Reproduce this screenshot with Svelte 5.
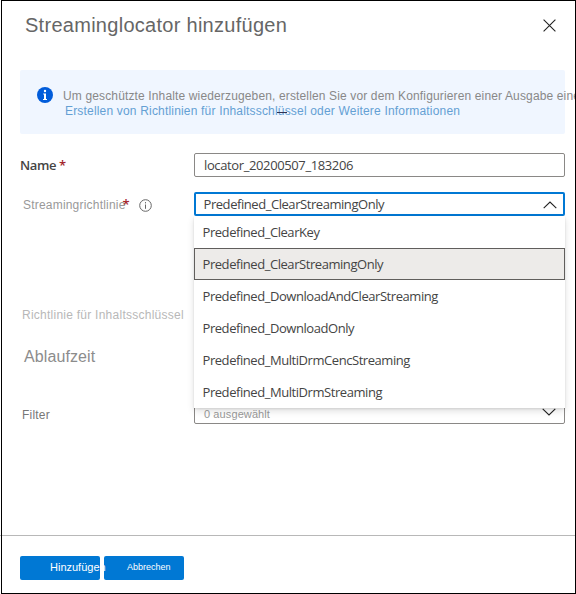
<script>
  const options = [
    'Predefined_ClearKey',
    'Predefined_ClearStreamingOnly',
    'Predefined_DownloadAndClearStreaming',
    'Predefined_DownloadOnly',
    'Predefined_MultiDrmCencStreaming',
    'Predefined_MultiDrmStreaming'
  ];
  let selected = $state('Predefined_ClearStreamingOnly');
</script>

<div class="panel">
  <header>
    <h1>Streaminglocator hinzufügen</h1>
    <svg class="close" width="13" height="13" viewBox="0 0 13 13"><path d="M.6.6 12.4 12.4M12.4.6.6 12.4" /></svg>
  </header>

  <section class="banner">
    <svg width="16" height="16" viewBox="0 0 16 16">
      <circle cx="8" cy="8" r="8" fill="#015cda" />
      <circle cx="8" cy="4" r="1.2" fill="#fff" />
      <path d="M6.200 6.500H9V12h1v1H6v-1h1V7.500h-.8z" fill="#fff" />
    </svg>
    <div class="message">
      <p>Um geschützte Inhalte wiederzugeben, erstellen Sie vor dem Konfigurieren einer Ausgabe eine</p>
      <a href="#policies">Erstellen von Richtlinien für Inhaltsschlüssel oder Weitere Informationen</a>
      <i class="dash"></i>
    </div>
  </section>

  <div class="row name">
    <span class="label">Name <b>*</b></span>
    <div class="field">locator_20200507_183206</div>
  </div>

  <div class="row policy">
    <span class="label"><span class="policy-text">Streamingrichtlinie</span><b>*</b>
      <svg class="info" width="13" height="13" viewBox="0 0 13 13"><circle cx="6.5" cy="6.5" r="5.8" /><path d="M6.5 5.5v4.3M6.5 3.1v1.3" /></svg>
    </span>
    <div class="field open">
      <span>{selected}</span>
      <svg class="chevron" width="14" height="8" viewBox="0 0 14 8"><path d="M.7 7.2 7 1l6.300 6.200" /></svg>
      <ul>
        {#each options as name}
          <li class:active={name === selected}>{name}</li>
        {/each}
      </ul>
    </div>
  </div>

  <div class="content-key">Richtlinie für Inhaltsschlüssel</div>
  <h2>Ablaufzeit</h2>

  <div class="row filter">
    <span class="label">Filter</span>
    <div class="field">
      <span>0 ausgewählt</span>
      <svg class="chevron" width="14" height="8" viewBox="0 0 14 8"><path d="M.7.8 7 7l6.300-6.200" /></svg>
    </div>
  </div>

  <footer>
    <button class="add">Hinzufügen</button>
    <button class="cancel">Abbrechen</button>
  </footer>
</div>

<style>
  :global(body) { background: #fff; overflow: hidden; }
  * { box-sizing: border-box; }
  .panel {
    position: relative; display: flex; flex-direction: column;
    width: 576px; height: 594px; padding: 0 11px 0 20px; overflow: hidden;
    background: #fff; font-family: "Liberation Sans", Arial, sans-serif; white-space: nowrap;
  }
  .panel::before {
    content: ""; position: absolute; inset: 0 0 0 1px; border: 1px solid #000; z-index: 5; pointer-events: none;
  }
  svg { display: block; flex: none; fill: none; }
  header { display: flex; height: 70px; padding: 14px 9.500px 0 5px; justify-content: space-between; }
  h1 { margin: 0; font-size: 20px; line-height: 22px; font-weight: 400; color: #666; letter-spacing: .28px; }
  .close { margin-top: 5px; stroke: #222; stroke-width: 1.1; }
  .banner {
    display: flex; height: 64px; padding: 17px 0 0 17px; gap: 10px; width: 545px;
    border-radius: 2px; background: #f0f6ff;
  }
  .message { position: relative; padding-top: 2px; font-size: 12px; line-height: 15px; }
  .message p { margin: 0; color: #888; letter-spacing: .14px; }
  .message a { display: block; margin-left: 2px; color: #64a0d4; letter-spacing: .18px; text-decoration: none; }
  .dash { position: absolute; left: 214px; top: 25px; width: 10px; height: 1px; background: #303050; }
  .row { display: flex; height: 24px; }
  .label { display: flex; align-items: center; width: 174px; font-size: 12px; }
  .label b { color: #a4262c; font-family: "Open Sans", sans-serif; font-size: 13px; font-weight: 600; line-height: 14px; }
  .field {
    position: relative; display: flex; align-items: center; justify-content: space-between; flex: none;
    width: 371px; height: 24px; padding: 0 8px 0 9px; border: 1px solid #8a8886; border-radius: 2px; background: #fff;
    font-family: "Open Sans", "Noto Sans", sans-serif; font-size: 13px; color: #444; letter-spacing: -.38px;
  }
  .name { margin-top: 19px; }
  .name .label { font-family: "Open Sans", sans-serif; font-size: 13px; font-weight: 600; color: #444; gap: 3px; letter-spacing: -.4px; }
  .policy { margin-top: 15px; position: relative; z-index: 2; }
  .policy .label { padding: 2px 0 0 3px; color: #999; }
  .policy-text { letter-spacing: .2px; }
  .policy .label b { margin: -2px 0 0 -3px; }
  .info { margin-left: 9px; stroke: #666; stroke-width: 1; }
  .open { border: 2px solid #0078d4; padding: 0 6.500px 0 7.500px; letter-spacing: -.44px; }
  .chevron { stroke: #222; stroke-width: 1.1; }
  .open .chevron { margin-top: 1px; }
  ul {
    position: absolute; left: -2px; top: 22px; width: 371px; margin: 0; padding: 0; list-style: none;
    background: #fff; box-shadow: 0 3px 7px rgba(0,0,0,.13), 0 1px 2px rgba(0,0,0,.1);
  }
  li { height: 32px; line-height: 32px; padding-left: 8.500px; }
  li.active { border: 1px solid #605e5c; background: #edebe9; line-height: 30px; padding-left: 7.500px; }
  .content-key { margin: 91px 0 0 2px; height: 16px; line-height: 16px; font-size: 12px; color: #b8b8b8; letter-spacing: .25px; }
  h2 { margin: 24px 0 0 4px; height: 20px; line-height: 20px; font-size: 16px; font-weight: 400; color: #8c8c8c; letter-spacing: .1px; }
  .filter { margin-top: 33px; }
  .filter .label { padding: 5px 0 0 2px; color: #777; letter-spacing: .2px; }
  .filter .field { font-family: "Liberation Sans", sans-serif; font-size: 11px; color: #999; letter-spacing: .1px; }
  .filter .field span { margin-top: 4px; }
  footer { display: flex; gap: 4px; margin: 111px -11px 0 -20px; padding: 20px 0 0 20px; border-top: 1px solid #b8b8b8; }
  button {
    width: 80px; height: 24px; padding: 0 0 2px; border: 0; border-radius: 2px; background: #0078d4; color: #fff;
    font-family: inherit; white-space: nowrap; text-align: left;
  }
  .add { position: relative; z-index: 1; padding-left: 30px; font-size: 11px; }
  .cancel { padding-left: 23px; font-size: 9px; }
</style>
